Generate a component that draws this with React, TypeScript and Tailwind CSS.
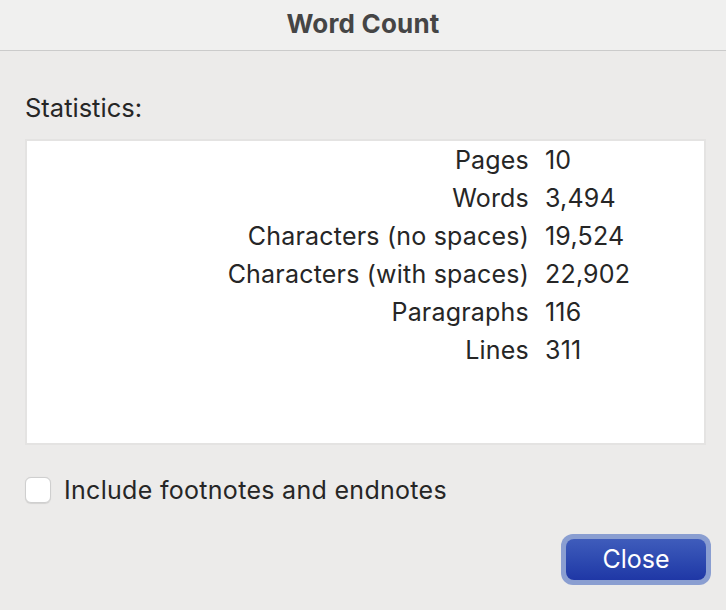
import React, { useState } from 'react'

const stats = [
    { label: 'Pages', value: '10' },
    { label: 'Words', value: '3,494' },
    { label: 'Characters (no spaces)', value: '19,524' },
    { label: 'Characters (with spaces)', value: '22,902' },
    { label: 'Paragraphs', value: '116' },
    { label: 'Lines', value: '311' },
]

function App() {
    const [includeNotes, setIncludeNotes] = useState(false)
    return (
        <div className="w-[726px] h-[610px] bg-[#ecebea] font-['Inter','Noto_Sans',sans-serif] text-[#262626] overflow-hidden">
            {/* title bar */}
            <div className="h-[51px] bg-[#f0f0ef] border-b border-[#cbcbcb] flex items-center justify-center">
                <p className="text-[26px] leading-[30px] font-bold text-[#454545] tracking-[0.2px] mt-[-2px]">Word Count</p>
            </div>

            <div className="px-[25px] pt-[42px]">
                <p className="text-[25.5px] leading-[30px]">Statistics:</p>

                <div className="mt-[16px] mr-[-5px] h-[306px] bg-white border-2 border-[#e4e3e2]">
                    {stats.map((row) => (
                        <div key={row.label} className="flex h-[38px] items-center text-[25px] leading-[30px] tracking-[0.2px]">
                            <span className="w-[502px] text-right">{row.label}</span>
                            <span className="pl-[16px]">{row.value}</span>
                        </div>
                    ))}
                </div>

                <label className="mt-[32px] flex items-center gap-[13px] cursor-pointer">
                    <input
                        type="checkbox"
                        checked={includeNotes}
                        onChange={(e) => setIncludeNotes(e.target.checked)}
                        className="appearance-none w-[26px] h-[26px] rounded-[6px] bg-white border border-[#cfcfcf] shadow-[0_0.5px_1px_rgba(0,0,0,0.1)]"
                    />
                    <span className="text-[25px] leading-[26px] tracking-[0.3px]">Include footnotes and endnotes</span>
                </label>

                <div className="mt-[31px] flex justify-end mr-[-10px]">
                    <button className="w-[150px] h-[51px] rounded-[12px] bg-[#8a9ed1] p-[5px]">
                        <span className="flex h-full w-full items-center justify-center rounded-[8px] bg-gradient-to-b from-[#3f5cbb] to-[#1f37a6] text-white text-[25px]">
                            Close
                        </span>
                    </button>
                </div>
            </div>
        </div>
    )
}

export default App
